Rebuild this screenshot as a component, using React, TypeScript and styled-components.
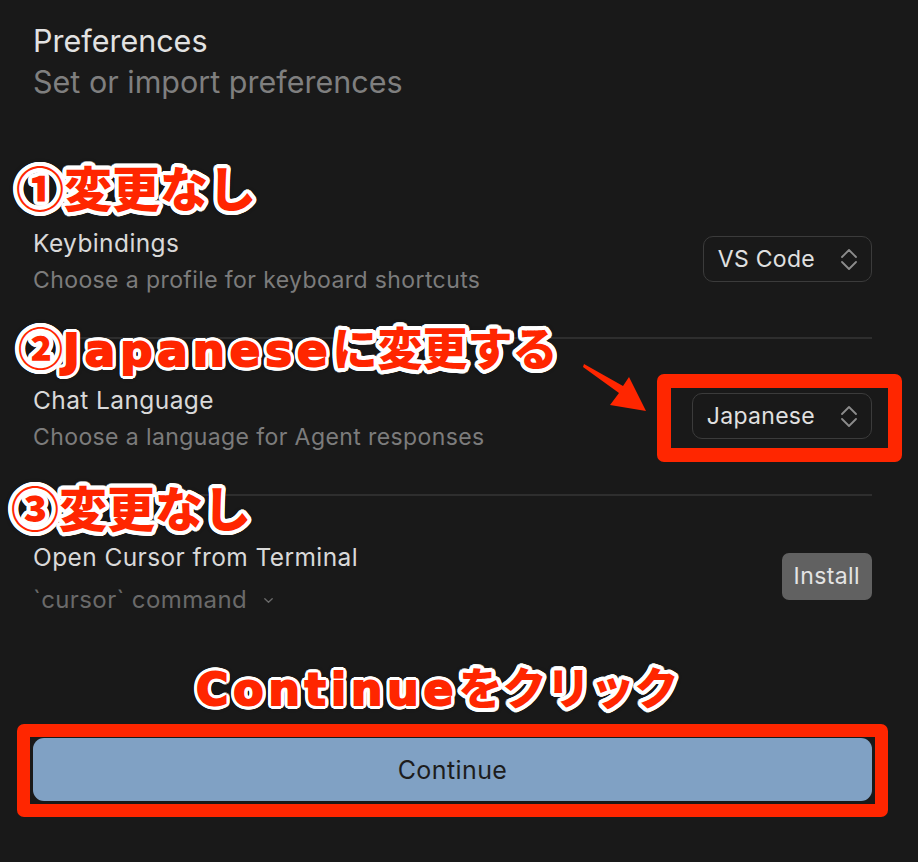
import React from "react";
import styled, { createGlobalStyle } from "styled-components";

const GlobalStyle = createGlobalStyle`
  html, body { margin: 0; padding: 0; background: #191919; }
  body { font-family: Inter, "Noto Sans", sans-serif; -webkit-font-smoothing: antialiased; }
`;

const ring = (() => {
  const parts: string[] = [];
  const r = 4;
  for (let i = 0; i < 24; i++) {
    const a = (i / 24) * Math.PI * 2;
    parts.push(`${(Math.cos(a) * r).toFixed(2)}px ${(Math.sin(a) * r).toFixed(2)}px 0 #ffffff`);
  }
  parts.push("0 0 6px rgba(0,0,0,0.5)");
  return parts.join(", ");
})();

const Page = styled.div`
  position: relative;
  width: 918px;
  height: 862px;
  box-sizing: border-box;
  padding: 20px 46px 0 33px;
  overflow: hidden;
`;

const Header = styled.header`
  display: flex;
  flex-direction: column;
`;

const Title = styled.h1<{ $muted?: boolean }>`
  margin: 0;
  font-size: 30.5px;
  line-height: 41px;
  font-weight: 400;
  color: ${(p) => (p.$muted ? "#7f7f7f" : "#e2e2e2")};
`;

const List = styled.section`
  display: flex;
  flex-direction: column;
  margin-top: 80px;
`;

const Row = styled.div`
  display: flex;
  align-items: center;
  justify-content: space-between;
  padding: 46px 0 42px;
  & + & {
    border-top: 2px solid #2e2e2e;
  }
`;

const Text = styled.div`
  display: flex;
  flex-direction: column;
  gap: 7px;
`;

const Label = styled.div`
  font-size: 24.5px;
  line-height: 30px;
  letter-spacing: 0.4px;
  color: #d9d9d9;
`;

const Desc = styled.div`
  font-size: 23px;
  line-height: 30px;
  letter-spacing: 0.4px;
  color: #7c7c7c;
`;

const Disclosure = styled.button`
  display: inline-flex;
  align-items: center;
  gap: 17px;
  margin-top: 6px;
  padding: 0;
  border: none;
  background: none;
  font-family: inherit;
  font-size: 24px;
  line-height: 30px;
  letter-spacing: 0.4px;
  color: #6a6a6a;
  cursor: pointer;
  align-self: flex-start;
`;

const Control = styled.div`
  display: flex;
  margin-bottom: 5px;
`;

const Select = styled.div`
  display: inline-flex;
  align-items: center;
  gap: 26px;
  height: 46px;
  box-sizing: border-box;
  padding: 0 14px 0 14px;
  border: 1.5px solid #3b3b3b;
  border-radius: 10px;
  font-size: 23px;
  letter-spacing: 0.3px;
  color: #e0e0e0;
`;

const InstallButton = styled.button`
  height: 47px;
  padding: 0 12px;
  border: none;
  border-radius: 7px;
  background: #616161;
  color: #e4e4e4;
  font-family: inherit;
  font-size: 23px;
  letter-spacing: 0.4px;
`;

const Highlight = styled.div<{ $t: number; $r: number; $b: number; $l: number; $w: number }>`
  position: relative;
  display: flex;
  &::after {
    content: "";
    position: absolute;
    top: ${(p) => -p.$t}px;
    right: ${(p) => -p.$r}px;
    bottom: ${(p) => -p.$b}px;
    left: ${(p) => -p.$l}px;
    border: ${(p) => p.$w}px solid #ff2600;
    border-radius: 7px;
    pointer-events: none;
  }
`;

const ContinueArea = styled.div`
  margin-top: 81px;
  display: flex;
  flex-direction: column;
`;

const ContinueButton = styled.button`
  flex: 1;
  height: 63px;
  border: none;
  border-radius: 11px;
  background: #80a1c4;
  color: #1d1d1d;
  font-family: inherit;
  font-size: 25px;
  letter-spacing: 0.4px;
`;

const Note = styled.div<{ $top: number; $left: number; $size: number }>`
  position: absolute;
  top: ${(p) => p.$top}px;
  left: ${(p) => p.$left}px;
  font-family: "Noto Sans CJK JP", sans-serif;
  font-weight: 900;
  font-size: ${(p) => p.$size}px;
  line-height: 1;
  color: #ff2600;
  white-space: nowrap;
  text-shadow: ${ring};
`;

const Latin = styled.span<{ $ls: number }>`
  font-family: "DejaVu Sans", sans-serif;
  font-weight: 700;
  letter-spacing: ${(p) => p.$ls}px;
  -webkit-text-stroke: 2px #ff2600;
`;

const Arrow = styled.svg`
  position: absolute;
  left: 570px;
  top: 355px;
`;

const Chevrons = () => (
  <svg width="16" height="21" viewBox="0 0 16 21" fill="none" stroke="#8c8c8c" strokeWidth="1.8" strokeLinecap="round" strokeLinejoin="round">
    <path d="M1 8 L8 1 L15 8" />
    <path d="M1 13 L8 20 L15 13" />
  </svg>
);

const SmallChevron = () => (
  <svg width="9" height="5" viewBox="0 0 9 5" fill="none" stroke="#6a6a6a" strokeWidth="1.3" strokeLinecap="round" strokeLinejoin="round">
    <path d="M0.8 0.8 L4.5 4.3 L8.2 0.8" />
  </svg>
);

export default function App() {
  return (
    <>
      <GlobalStyle />
      <Page>
        <Header>
          <Title>Preferences</Title>
          <Title $muted>Set or import preferences</Title>
        </Header>
        <List>
          <Row>
            <Text>
              <Label>Keybindings</Label>
              <Desc>Choose a profile for keyboard shortcuts</Desc>
            </Text>
            <Control>
              <Select>
                <span>VS Code</span>
                <Chevrons />
              </Select>
            </Control>
          </Row>
          <Row>
            <Text>
              <Label>Chat Language</Label>
              <Desc>Choose a language for Agent responses</Desc>
            </Text>
            <Control>
              <Highlight $t={19} $r={30} $b={23} $l={35} $w={14}>
                <Select>
                  <span>Japanese</span>
                  <Chevrons />
                </Select>
              </Highlight>
            </Control>
          </Row>
          <Row>
            <Text>
              <Label>Open Cursor from Terminal</Label>
              <Disclosure>
                `cursor` command
                <SmallChevron />
              </Disclosure>
            </Text>
            <Control>
              <InstallButton>Install</InstallButton>
            </Control>
          </Row>
        </List>
        <ContinueArea>
          <Highlight $t={14} $r={16} $b={16} $l={16} $w={13}>
            <ContinueButton>Continue</ContinueButton>
          </Highlight>
        </ContinueArea>

        <Note $top={162} $left={16} $size={48}>①変更なし</Note>
        <Note $top={324} $left={18} $size={45}>
          ②<Latin $ls={5}>Japanese</Latin>に変更する
        </Note>
        <Note $top={482} $left={11} $size={48}>③変更なし</Note>
        <Note $top={664} $left={196} $size={44}>
          <Latin $ls={5}>Continue</Latin>をクリック
        </Note>

        <Arrow width="100" height="70" viewBox="0 0 100 70">
          <polygon points="14,9 53,31 59,22 76,56 40,50 49,38 13,12" fill="#ff2600" />
        </Arrow>
      </Page>
    </>
  );
}
